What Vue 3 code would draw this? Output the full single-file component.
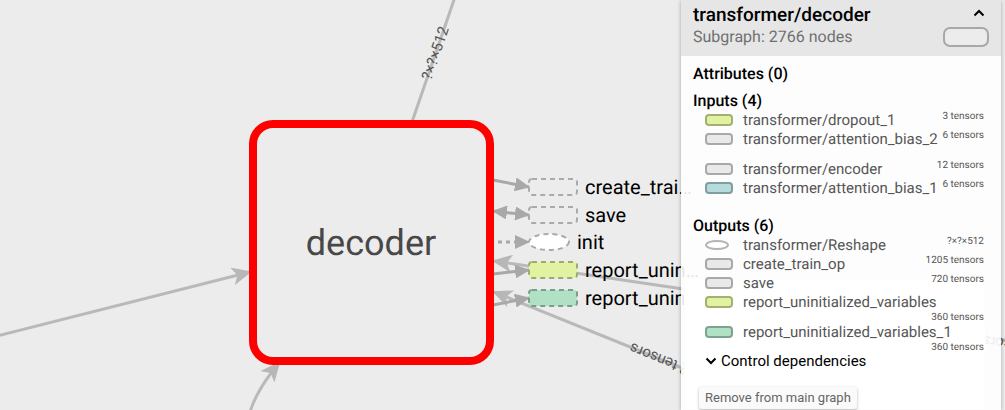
<script setup>
import { ref } from 'vue'

const open = ref(true)

const inputs = [
  { name: 'transformer/dropout_1', size: '3 tensors', fill: '#e1f2a3', stroke: '#a4b06f' },
  { name: 'transformer/attention_bias_2', size: '6 tensors', fill: '#e9e9e9', stroke: '#a9a9a9', tall: true },
  { name: 'transformer/encoder', size: '12 tensors', fill: '#e9e9e9', stroke: '#a9a9a9' },
  { name: 'transformer/attention_bias_1', size: '6 tensors', fill: '#b6dbdc', stroke: '#7f9f9f', tall: true }
]

const outputs = [
  { name: 'transformer/Reshape', size: '?×?×512', fill: '#ffffff', stroke: '#b4b4b4', oval: true },
  { name: 'create_train_op', size: '1205 tensors', fill: '#e9e9e9', stroke: '#a9a9a9' },
  { name: 'save', size: '720 tensors', fill: '#e9e9e9', stroke: '#a9a9a9' },
  { name: 'report_uninitialized_variables', size: '360 tensors', fill: '#e1f2a3', stroke: '#a4b06f', tall: true },
  { name: 'report_uninitialized_variables_1', size: '360 tensors', fill: '#b0e1c5', stroke: '#7da38f', tall: true }
]

const sections = [
  { title: 'Inputs (4)', rows: inputs },
  { title: 'Outputs (6)', rows: outputs }
]

const annotations = [
  { label: 'create_trai…', y: 187, fill: 'none', stroke: '#aaa' },
  { label: 'save', y: 215, fill: 'none', stroke: '#aaa' },
  { label: 'report_unin…', y: 270, fill: '#e1f2a3', stroke: '#9daa70' },
  { label: 'report_unin…', y: 298, fill: '#b0e1c5', stroke: '#7b9d8a' }
]
</script>

<template>
  <main class="scene">
    <svg class="graph" aria-label="Graph of transformer/decoder">
      <defs>
        <marker id="dart" viewBox="0 0 20 18" refX="18" refY="9" markerWidth="20" markerHeight="18" markerUnits="userSpaceOnUse" orient="auto-start-reverse">
          <path d="M0 0 20 9 0 18 5 9Z" fill="#b7b7b7" />
        </marker>
        <marker id="tip" viewBox="0 0 15 14" refX="14" refY="7" markerWidth="15" markerHeight="14" markerUnits="userSpaceOnUse" orient="auto-start-reverse">
          <path d="M0 0 15 7 0 14Z" fill="#a8a8a8" />
        </marker>
      </defs>

      <g class="edge">
        <path d="M455-3 412 122" />
        <path d="M-3 336 250 272" marker-end="url(#dart)" />
        <path d="M250 412C255 395 264 381 279 363" marker-end="url(#dart)" />
        <path d="M1010 341 690 290 494 261" marker-end="url(#dart)" />
        <path d="M692 372 494 292" marker-end="url(#dart)" />
      </g>
      <g class="edge near">
        <path d="M493 180 529 187" marker-end="url(#tip)" />
        <path d="M493 211 529 215" marker-start="url(#tip)" marker-end="url(#tip)" />
        <path d="M498 242H529" stroke-dasharray="4 4" marker-end="url(#tip)" />
        <path d="M493 274 529 270" marker-end="url(#tip)" />
        <path d="M493 305 529 298" marker-end="url(#tip)" />
      </g>

      <text class="edge-label" transform="translate(431 81) rotate(-71)">?×?×512</text>
      <text class="edge-label" transform="translate(690 366) rotate(202)">2 tensors</text>
      <text class="edge-label" transform="translate(1045 344) rotate(188)">2 tensors</text>

      <rect class="decoder" x="253" y="124" width="237" height="237" rx="20" />
      <text class="decoder-label" x="371" y="255">decoder</text>

      <g v-for="(a, i) in annotations" :key="i">
        <rect class="annotation" x="529" :y="a.y - 8" width="48" height="16" rx="3" :fill="a.fill" :stroke="a.stroke" />
        <text class="annotation-label" x="585" :y="a.y + 7">{{ a.label }}</text>
      </g>
      <ellipse class="annotation" cx="549" cy="242" rx="20" ry="8" fill="#fff" stroke="#aaa" />
      <text class="annotation-label" x="577" y="249">init</text>
    </svg>

    <div class="minimap"></div>

    <aside class="panel">
      <header class="head">
        <div class="head-text">
          <h1>transformer/decoder</h1>
          <p>Subgraph: 2766 nodes</p>
        </div>
        <div class="head-side">
          <button class="toggle" type="button" aria-label="Toggle details" :aria-expanded="open" @click="open = !open">
            <svg width="12" height="8" viewBox="0 0 12 8"><path d="M1.500 6.500 6 2 10.500 6.500" /></svg>
          </button>
          <svg width="46" height="20" viewBox="0 0 46 20"><rect class="big-node" x="1" y="1" width="44" height="18" rx="6" /></svg>
        </div>
      </header>

      <div v-if="open" class="body">
        <h2>Attributes (0)</h2>
        <section v-for="s in sections" :key="s.title">
          <h2>{{ s.title }}</h2>
          <ul>
            <li v-for="r in s.rows" :key="r.name" :class="{ tall: r.tall }">
              <svg class="icon" width="28" height="12" viewBox="0 0 28 12">
                <ellipse v-if="r.oval" cx="12" cy="6" rx="11" ry="4" :fill="r.fill" :stroke="r.stroke" />
                <rect v-else x="1" y="1" width="26" height="10" rx="3" :fill="r.fill" :stroke="r.stroke" />
              </svg>
              <span class="name">{{ r.name }}</span>
              <span class="size">{{ r.size }}</span>
            </li>
          </ul>
        </section>
        <button class="control" type="button">
          <svg width="12" height="8" viewBox="0 0 12 8"><path d="M1.500 1.500 6 6 10.500 1.500" /></svg>
          Control dependencies
        </button>
        <button class="remove" type="button">Remove from main graph</button>
      </div>
    </aside>
  </main>
</template>

<style>
body {
  margin: 0;
}
</style>

<style scoped>
.scene {
  position: relative;
  height: 100vh;
  overflow: hidden;
  background: #ececec;
  font-family: Roboto, "Liberation Sans", sans-serif;
  text-rendering: geometricPrecision;
}
.graph {
  display: block;
  width: 100%;
  height: 100%;
}
.edge path {
  fill: none;
  stroke: #b9b9b9;
  stroke-width: 3;
}
.edge.near path {
  stroke: #a8a8a8;
}
.edge-label {
  font-size: 15px;
  fill: #555;
}
.decoder {
  fill: #ececec;
  stroke: #f00;
  stroke-width: 8;
}
.decoder-label {
  font-size: 36px;
  fill: #484848;
  text-anchor: middle;
}
.annotation {
  stroke-width: 2;
  stroke-dasharray: 5 4;
}
.annotation-label {
  font-size: 20px;
}
.minimap {
  position: absolute;
  top: 278px;
  right: 19px;
  bottom: 0;
  width: 302px;
  box-sizing: border-box;
  border: 1px solid #ddd;
  background: #fff;
}
.panel {
  position: absolute;
  top: 0;
  right: 4px;
  width: 320px;
  min-height: 100%;
  background: rgba(255, 255, 255, 0.9);
  box-shadow: 0 1px 4px rgba(0, 0, 0, 0.3);
}
.head {
  display: flex;
  justify-content: space-between;
  height: 56px;
  box-sizing: border-box;
  padding: 4px 12px 8px;
  background: #e6e6e6;
}
h1,
h2,
p,
ul {
  margin: 0;
  padding: 0;
}
h1 {
  font-size: 19px;
  line-height: 22px;
  font-weight: 500;
}
.head p {
  font-size: 16px;
  line-height: 22px;
  color: #707070;
}
.head-side {
  display: flex;
  flex-direction: column;
  align-items: flex-end;
  gap: 10px;
  padding-top: 5px;
}
button {
  border: 0;
  background: none;
  padding: 0;
  font-family: inherit;
  cursor: pointer;
}
.toggle {
  display: flex;
  margin-right: 4px;
}
button path {
  fill: none;
  stroke: #000;
  stroke-width: 2;
}
.big-node {
  fill: #ececec;
  stroke: #a8a8a8;
  stroke-width: 2;
}
.body {
  padding: 8px 12px 0;
}
h2 {
  font-size: 16px;
  line-height: 20px;
  font-weight: 500;
}
.body > h2 {
  margin-bottom: 7px;
}
section {
  margin-bottom: 7px;
}
section:last-of-type {
  margin-bottom: 0;
}
ul {
  list-style: none;
}
li {
  display: flex;
  flex-wrap: wrap;
  align-content: flex-start;
  height: 19px;
  padding: 0 5px 0 12px;
}
li.tall {
  height: 30px;
}
.icon {
  margin: 3px 10px 0 0;
}
.icon * {
  stroke-width: 2;
}
.name {
  font-size: 15px;
  line-height: 19px;
  color: #565656;
}
.size {
  margin-left: auto;
  font-size: 10px;
  line-height: 12px;
  color: #565656;
}
.control {
  display: flex;
  align-items: center;
  gap: 4px;
  padding-left: 12px;
  font-size: 15px;
  line-height: 16px;
}
.remove {
  margin: 18px 6px 0;
  padding: 0 6px;
  border-radius: 3px;
  background: #fafafa;
  box-shadow: 0 1px 3px rgba(0, 0, 0, 0.3);
  font-size: 13px;
  line-height: 22px;
  color: #666;
}
</style>
